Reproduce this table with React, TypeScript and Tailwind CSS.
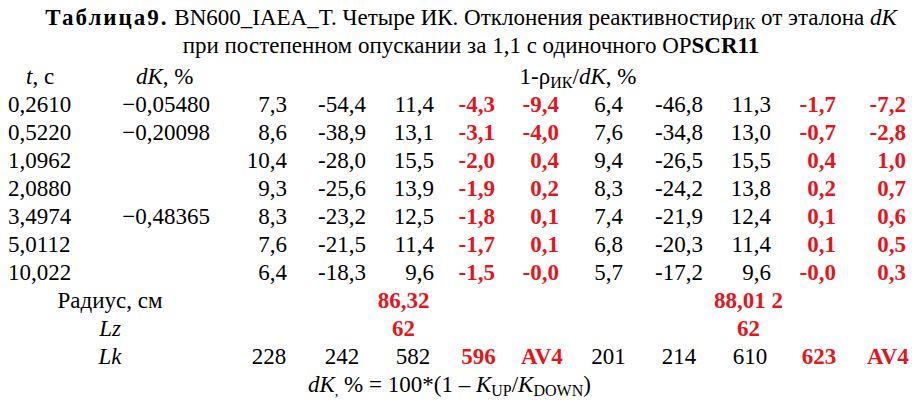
import React from "react";

const F = "font-['Liberation_Serif'] text-[23px]";
const RED = "text-[#e8141c] font-bold";

const rows: string[][] = [
  ["0,2610", "−0,05480", "7,3", "-54,4", "11,4", "-4,3", "-9,4", "6,4", "-46,8", "11,3", "-1,7", "-7,2"],
  ["0,5220", "−0,20098", "8,6", "-38,9", "13,1", "-3,1", "-4,0", "7,6", "-34,8", "13,0", "-0,7", "-2,8"],
  ["1,0962", "", "10,4", "-28,0", "15,5", "-2,0", "0,4", "9,4", "-26,5", "15,5", "0,4", "1,0"],
  ["2,0880", "", "9,3", "-25,6", "13,9", "-1,9", "0,2", "8,3", "-24,2", "13,8", "0,2", "0,7"],
  ["3,4974", "−0,48365", "8,3", "-23,2", "12,5", "-1,8", "0,1", "7,4", "-21,9", "12,4", "0,1", "0,6"],
  ["5,0112", "", "7,6", "-21,5", "11,4", "-1,7", "0,1", "6,8", "-20,3", "11,4", "0,1", "0,5"],
  ["10,022", "", "6,4", "-18,3", "9,6", "-1,5", "-0,0", "5,7", "-17,2", "9,6", "-0,0", "0,3"],
];

const pads = [
  "pr-[18px]",
  "pr-[13px]",
  "pr-[13px]",
  "pr-[15px]",
  "pr-[15px]",
  "pr-[20px]",
  "pr-[12px]",
  "pr-[14px]",
  "pr-[17px]",
  "pr-[17px]",
];

const redCols = new Set([5, 6, 10, 11]);

const lk = ["228", "242", "582", "596", "AV4", "201", "214", "610", "623", "AV4"];

export default function App() {
  return (
    <div className="font-serif bg-white text-black">
      <div className="w-[924px] h-[409px] pt-[4px] overflow-hidden font-[Liberation_Serif]">
        <div className={"h-[28px] leading-[28px] flex justify-center pl-[18px] whitespace-nowrap " + F}>
          <span>
            <span className="font-bold tracking-[2px]">Таблица9.</span> BN600_IAEA_T. Четыре ИК. Отклонения реактивностиρ
            <sub className="text-[16px]">ИК</sub> от эталона <i>dK</i>
          </span>
        </div>
        <div className={"h-[28px] leading-[28px] flex justify-center pl-[18px] whitespace-nowrap " + F}>
          <span>
            при постепенном опускании за 1,1 с одиночного OP<b>SCR11</b>
          </span>
        </div>
        <div className="grid grid-cols-[120px_113px_72px_74px_68px_63px_64px_69px_72px_70px_68px_70px] mt-[3px]">
          <div className={"h-[28px] leading-[28px] pl-[26px] whitespace-nowrap " + F}>
            <i>t</i>, с
          </div>
          <div className={"h-[28px] leading-[28px] pl-[16px] whitespace-nowrap " + F}>
            <i>dK</i>, %
          </div>
          <div className={"col-span-10 h-[28px] leading-[28px] flex justify-center whitespace-nowrap " + F}>
            <span>
              1-ρ<sub className="text-[16px]">ИК</sub>/<i>dK</i>, %
            </span>
          </div>

          {rows.map((r, ri) => (
            <React.Fragment key={ri}>
              <div className={"h-[28px] leading-[28px] pl-[8px] whitespace-nowrap " + F}>{r[0]}</div>
              <div className={"h-[28px] leading-[28px] flex justify-end pr-[23px] whitespace-nowrap " + F}>{r[1]}</div>
              {r.slice(2).map((v, ci) => (
                <div
                  key={ci}
                  className={
                    "h-[28px] leading-[28px] flex justify-end whitespace-nowrap " +
                    F +
                    " " +
                    pads[ci] +
                    (redCols.has(ci + 2) ? " " + RED : "")
                  }
                >
                  {v}
                </div>
              ))}
            </React.Fragment>
          ))}

          <div className={"col-span-2 h-[28px] leading-[28px] flex justify-center pr-[13px] whitespace-nowrap " + F}>
            Радиус, см
          </div>
          <div className={"col-span-5 h-[28px] leading-[28px] flex justify-center whitespace-nowrap " + F + " " + RED}>86,32</div>
          <div className={"col-span-5 h-[28px] leading-[28px] flex justify-center whitespace-nowrap " + F + " " + RED}>88,01 2</div>

          <div className={"col-span-2 h-[28px] leading-[28px] flex justify-center pr-[13px] " + F}>
            <i>Lz</i>
          </div>
          <div className={"col-span-5 h-[28px] leading-[28px] flex justify-center " + F + " " + RED}>62</div>
          <div className={"col-span-5 h-[28px] leading-[28px] flex justify-center " + F + " " + RED}>62</div>

          <div className={"col-span-2 h-[28px] leading-[28px] flex justify-center pr-[13px] " + F}>
            <i>Lk</i>
          </div>
          {lk.map((v, i) => (
            <div
              key={i}
              className={
                "h-[28px] leading-[28px] flex justify-center whitespace-nowrap " +
                F +
                (redCols.has(i + 2) ? " " + RED : "")
              }
            >
              {v}
            </div>
          ))}

          <div className={"col-span-12 h-[27px] leading-[27px] pl-[308px] whitespace-nowrap " + F}>
            <i>dK</i>
            <span className="relative top-[4px] text-[14px]">,</span> % = 100*(1 – <i>K</i>
            <sub className="text-[16px]">UP</sub>/<i>K</i>
            <sub className="text-[16px]">DOWN</sub>)
          </div>
        </div>
      </div>
    </div>
  );
}
